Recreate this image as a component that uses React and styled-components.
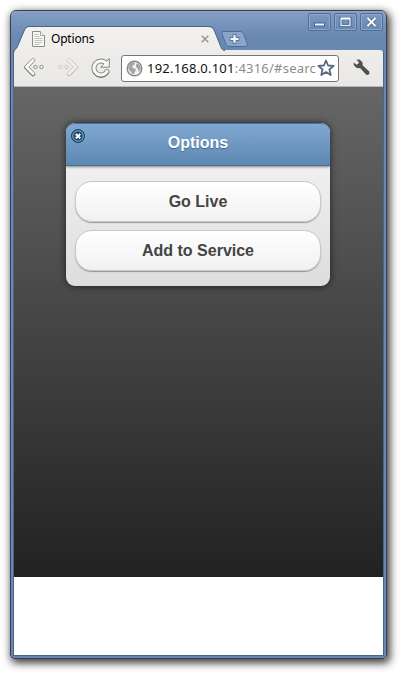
import React from 'react';
import styled, { createGlobalStyle } from 'styled-components';

const GlobalStyle = createGlobalStyle`
  * { box-sizing: border-box; }
  body { margin: 0; background: #fff; overflow: hidden; }
`;

const Desktop = styled.div`
  width: 403px;
  height: 675px;
  padding: 10px 0 0 10px;
  background: #fff;
`;

const Window = styled.div`
  display: flex;
  flex-direction: column;
  width: 377px;
  height: 649px;
  border: 1px solid #3b4048;
  border-radius: 6px 6px 4px 4px;
  background: linear-gradient(#839fc5 0, #6a89b0 26px, #6787af 100%);
  box-shadow: 2px 3px 9px 1px rgba(0, 0, 0, 0.78);
`;

const TitleBar = styled.header`
  display: flex;
  height: 40px;
  flex: none;
  padding-left: 2px;
  box-shadow: inset 0 1px #8ba5c9;
  border-radius: 5px 5px 0 0;
`;

const Tab = styled.div`
  position: relative;
  display: flex;
  align-items: center;
  width: 212px;
  height: 25px;
  margin-top: 15px;
  padding: 0 16px 0 19px;
  font: 12px/24px "Noto Sans", sans-serif;
  letter-spacing: -0.2px;
  color: #000;
`;

const TabShape = styled.svg`
  position: absolute;
  left: 0;
  top: 0;
  overflow: visible;
`;

const TabTitle = styled.span`
  position: relative;
  flex: 1;
  margin-left: 6px;
`;

const Glyph = styled.svg`
  display: block;
  flex: none;
  position: relative;
  overflow: visible;
`;

const NewTab = styled(Glyph)`
  margin: 20px 0 0 -4px;
`;

const WindowControls = styled.div`
  display: flex;
  gap: 3px;
  margin: 2px 0 0 auto;
  padding-right: 3px;
`;

const ControlButton = styled.button`
  display: block;
  width: 23px;
  height: 18px;
  padding: 0;
  border: 1px solid #506f99;
  border-radius: 2px;
  background: linear-gradient(#7b98bf, #6988b1);
  box-shadow: inset 0 0 0 1px #8da7ca;
`;

const Client = styled.main`
  display: flex;
  flex: 1;
  flex-direction: column;
  min-height: 0;
  margin: -1px 2px 2px;
  border: 1px solid #46658f;
  border-top-width: 0;
  border-radius: 0 4px 0 0;
`;

const Toolbar = styled.nav`
  display: flex;
  align-items: center;
  height: 37px;
  flex: none;
  padding: 0 0 1px 9px;
  border-bottom: 1px solid #b8b8b7;
  border-radius: 0 3px 0 0;
  background: linear-gradient(#eeedec, #e9e8e6);
`;

const AddressBar = styled.div`
  display: flex;
  align-items: center;
  width: 218px;
  height: 27px;
  margin: 1px 0 0 10px;
  padding: 0 2px 0 4px;
  border: 1px solid #777674;
  border-radius: 3px;
  background: #fff;
`;

const Url = styled.span`
  width: 170px;
  margin-left: 4px;
  white-space: nowrap;
  font: 13px/20px "Noto Sans", sans-serif;
  letter-spacing: 0.22px;
  color: #8b8b8b;
`;

const Host = styled.span`
  color: #111;
`;

const Wrench = styled(Glyph)`
  margin-left: 14px;
`;

const Viewport = styled.section`
  flex: 1;
  min-height: 0;
  background: #fff;
`;

const Page = styled.div`
  display: flow-root;
  height: 490px;
  background: linear-gradient(#666, #222);
`;

const Dialog = styled.div`
  width: 264px;
  height: 163px;
  margin: 36px 0 0 52px;
  overflow: hidden;
  border-radius: 9px;
  background: linear-gradient(#f0f0f0 42px, #ddd);
  box-shadow: 0 0 7px rgba(0, 0, 0, 0.65);
  font: bold 16px/20px "Liberation Sans", Arial, sans-serif;
`;

const DialogHeader = styled.header`
  position: relative;
  height: 43px;
  padding-top: 9px;
  border: solid #456f9a;
  border-width: 1px 0;
  border-radius: 9px 9px 0 0;
  background: linear-gradient(#81a8d2, #5d88b1);
  box-shadow: 0 1px 3px rgba(0, 0, 0, 0.45);
  color: #fff;
  text-align: center;
  text-shadow: 0 1px 1px #3e6790;
`;

const CloseButton = styled(Glyph)`
  position: absolute;
  left: 4px;
  top: 4px;
`;

const Actions = styled.div`
  display: flex;
  flex-direction: column;
  gap: 8px;
  padding: 15px 9px 0;
`;

const ActionButton = styled.button`
  height: 41px;
  padding: 0;
  border: 1px solid #c8c8c8;
  border-radius: 17px;
  background: linear-gradient(#fff, #f1f1f1);
  box-shadow: 0 1px 1px rgba(0, 0, 0, 0.34);
  color: #444;
  font: inherit;
  text-shadow: 0 1px 1px #f6f6f6;
`;

const ReloadGlyph = styled(Glyph)`
  margin-left: 12px;
`;

const ForwardWrap = styled.div`
  margin-left: 12px;
`;

function DocumentIcon() {
  return (
    <Glyph width="13" height="16" viewBox="0 0 13 16">
      <path d="M.5.5h8l4 4v11H.5z" fill="#f6f6f4" stroke="#8d8d88" />
      <path d="M8.5.5v4h4" fill="#fff" stroke="#a3a39e" />
      <path d="M2.5 3.5h4m-4 2h5m-5 2h8m-8 2h8m-8 2h8m-8 2h5" stroke="#c4c4c0" />
    </Glyph>
  );
}

function HistoryIcon({ forward = false }) {
  return (
    <Glyph width="22" height="22" viewBox="0 0 22 22" opacity={forward ? 0.36 : 1}>
      <g transform={forward ? 'translate(22 0) scale(-1 1)' : undefined} fill="#f8f8f7" stroke="#8d8d89">
        <path d="M1 10 8.8 1.8c1.300-1.200 4.200.7 2.500 2.600L5.900 10l5.400 5.600c1.500 1.900-1.100 4-2.500 2.600z" strokeLinejoin="round" />
        <path d="m1.300 10.600 7.400 7.800c1.200 1 3 .1 3.200-1.100" fill="none" stroke="#6c6c69" />
        <circle cx="12.500" cy="10" r="1.700" />
        <circle cx="18.500" cy="10" r="1.700" />
      </g>
    </Glyph>
  );
}

function ReloadIcon() {
  return (
    <ReloadGlyph width="20" height="22" viewBox="0 0 20 22" fill="none">
      <path d="M15.300 6.500A7 7 0 1 0 16 14.500" stroke="#858581" strokeWidth="5" strokeLinecap="round" />
      <path d="M18.300 1.500v8.700h-8.500l2.700-2.800z" fill="#f7f7f6" stroke="#858581" strokeLinejoin="round" />
      <path d="M15.300 6.500A7 7 0 1 0 16 14.500" stroke="#f7f7f6" strokeWidth="3.200" strokeLinecap="round" />
      <path d="M2 15.500c3.500 6.500 12.300 6.400 15.900.3" stroke="#70706d" />
    </ReloadGlyph>
  );
}

export default function App() {
  return (
    <>
      <GlobalStyle />
      <Desktop>
        <Window>
          <TitleBar>
            <Tab>
              <TabShape width="212" height="27" viewBox="0 0 212 27">
                <defs>
                  <linearGradient id="tabFill" x1="0" y1="0" x2="0" y2="1">
                    <stop stopColor="#f2f1f0" />
                    <stop offset="1" stopColor="#eeedec" />
                  </linearGradient>
                </defs>
                <path d="M1 27c0-3 3-4 4-7l6-14c1.700-4 2.500-5 6-5h178c4 0 5 1 6.500 4l6 15c1.500 3 2 4 4.500 4.500V27z" fill="url(#tabFill)" />
                <path d="M.5 27c0-3 3-4 4-7l6-14C12.300 1.800 13.300.5 17 .5h178c4 0 5.200 1.500 6.500 4.500l6 15c1.200 3 1.800 4.500 4.500 4.500" fill="none" stroke="#46658e" />
              </TabShape>
              <DocumentIcon />
              <TabTitle>Options</TabTitle>
              <Glyph width="8" height="8" viewBox="0 0 8 8" aria-label="Close tab">
                <path d="m.7.7 6.6 6.6m0-6.6L.7 7.3" stroke="#969693" strokeWidth="1.5" />
              </Glyph>
            </Tab>
            <NewTab width="27" height="16" viewBox="0 0 27 16">
              <path d="M2 .5h17c2 0 3 1 4 3l3 8.500c1 2.500 0 3.500-2 3.500H9c-3 0-3.500-1-4.500-3.500L1.500 4C.8 2 .5.5 2 .5z" fill="#8aa5c7" stroke="#4c6d98" />
              <path d="M12 3.500h3v3h3v3h-3v3h-3v-3H9v-3h3z" fill="#f7f7f6" stroke="#56769e" />
            </NewTab>
            <WindowControls>
              <ControlButton aria-label="Minimize">
                <Glyph width="21" height="16" viewBox="0 0 21 16">
                  <path d="M5 8.500h11v4H5z" fill="#46658e" />
                  <path d="M6 9.500h9v2H6z" fill="#f5f5f5" />
                </Glyph>
              </ControlButton>
              <ControlButton aria-label="Maximize">
                <Glyph width="21" height="16" viewBox="0 0 21 16">
                  <rect x="6" y="4.500" width="9" height="7" fill="none" stroke="#46658e" strokeWidth="3" />
                  <rect x="6" y="4.500" width="9" height="7" fill="none" stroke="#e9eef5" strokeWidth="1.300" />
                  <path d="M6 4.500h9" stroke="#fff" strokeWidth="2" />
                </Glyph>
              </ControlButton>
              <ControlButton aria-label="Close">
                <Glyph width="21" height="16" viewBox="0 0 21 16">
                  <path d="m7 4.500 7 7m0-7-7 7" stroke="#46658e" strokeWidth="3.500" />
                  <path d="m6.500 4 8 8m0-8-8 8" stroke="#fff" strokeWidth="1.800" />
                </Glyph>
              </ControlButton>
            </WindowControls>
          </TitleBar>
          <Client>
            <Toolbar>
              <HistoryIcon />
              <ForwardWrap><HistoryIcon forward /></ForwardWrap>
              <ReloadIcon />
              <AddressBar>
                <Glyph width="17" height="17" viewBox="0 0 17 17">
                  <circle cx="8.500" cy="8.500" r="7.300" fill="#f2f2f2" stroke="#898989" strokeWidth="1.400" />
                  <path d="m4 3 3-1 2 1-1 2-2 1 1 2 3 1-1 3-2 3-2-3-2-2-1-3 1-2zM11 3l3 2 1 4-2 3-1-3-2-2V5z" fill="#a5a5a5" />
                </Glyph>
                <Url><Host>192.168.0.101</Host>:4316/#searc</Url>
                <Glyph width="18" height="18" viewBox="0 0 18 18">
                  <path d="m9 1.500 2.100 5 5.500.4-4.200 3.600 1.300 5.500L9 13.100 4.300 16l1.300-5.500-4.200-3.600 5.500-.4z" fill="#fff" stroke="#596785" strokeWidth="1.800" strokeLinejoin="round" />
                </Glyph>
              </AddressBar>
              <Wrench width="17" height="17" viewBox="0 0 17 17">
                <path d="M3 .8 6.500.5l3 2.700.1 3 6.600 6.300.3 2-1.500 1.500-1.800-.2-5.900-6.500-3.700-.2L.8 6.200.6 3.500l3 2.300 2.200-1.500-.5-2z" fill="#51514e" />
              </Wrench>
            </Toolbar>
            <Viewport>
              <Page>
                <Dialog role="dialog">
                  <DialogHeader>
                    <CloseButton width="16" height="16" viewBox="0 0 16 16">
                      <circle cx="8" cy="8" r="6.500" fill="#244f71" stroke="#174563" />
                      <circle cx="8" cy="8" r="5.300" fill="none" stroke="#78adc9" strokeWidth="1" />
                      <path d="m5.800 6 4.400 4.400m0-4.400-4.400 4.400" stroke="#fff" strokeWidth="2" />
                    </CloseButton>
                    Options
                  </DialogHeader>
                  <Actions>
                    <ActionButton>Go Live</ActionButton>
                    <ActionButton>Add to Service</ActionButton>
                  </Actions>
                </Dialog>
              </Page>
            </Viewport>
          </Client>
        </Window>
      </Desktop>
    </>
  );
}
